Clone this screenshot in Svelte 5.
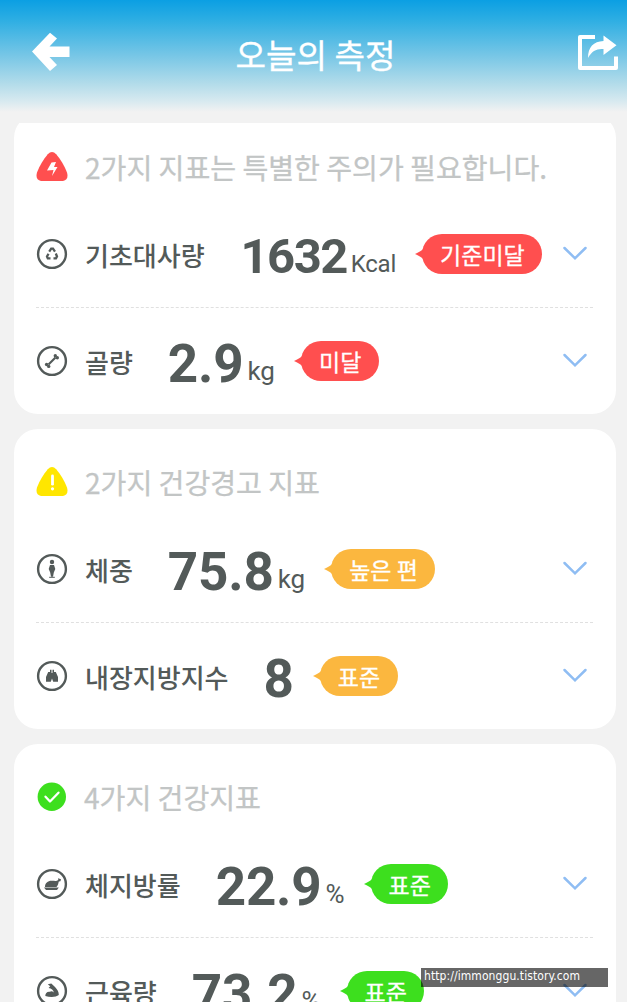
<script lang="ts">
  type Row = {
    icon: string;
    label: string;
    value: string;
    unit: string;
    status: string;
    gap: number;
    compact?: boolean;
  };

  const groups: { tone: string; title: string; rows: Row[] }[] = [
    {
      tone: 'danger',
      title: '2가지 지표는 특별한 주의가 필요합니다.',
      rows: [
        { icon: 'recycle', label: '기초대사량', value: '1632', unit: 'Kcal', status: '기준미달', gap: 36, compact: true },
        { icon: 'bone', label: '골량', value: '2.9', unit: 'kg', status: '미달', gap: 35 },
      ],
    },
    {
      tone: 'warning',
      title: '2가지 건강경고 지표',
      rows: [
        { icon: 'body', label: '체중', value: '75.8', unit: 'kg', status: '높은 편', gap: 35 },
        { icon: 'organ', label: '내장지방지수', value: '8', unit: '', status: '표준', gap: 35 },
      ],
    },
    {
      tone: 'good',
      title: '4가지 건강지표',
      rows: [
        { icon: 'roast', label: '체지방률', value: '22.9', unit: '%', status: '표준', gap: 35 },
        { icon: 'muscle', label: '근육량', value: '73.2', unit: '%', status: '표준', gap: 35 },
      ],
    },
  ];
</script>

<div class="screen">
  <header class="topbar">
    <button class="icon-btn" aria-label="뒤로">
      <svg width="40" height="40" viewBox="0 0 40 40">
        <path d="M1 19.5 L19 .8 L26 6.5 L18.5 14.5 H38.5 V25 H18.5 L26 33 L19 39 Z" fill="#fff" />
      </svg>
    </button>
    <h1>오늘의 측정</h1>
    <button class="icon-btn" aria-label="공유">
      <svg width="42" height="42" viewBox="0 0 42 42">
        <path d="M18 5 H3 V36 H39 V24.5" fill="none" stroke="#fff" stroke-width="4" stroke-linejoin="round" />
        <path d="M11 26 C11 15 16.5 9.5 26.5 9 V3.5 L39.5 13.2 L26.5 23 V17 C19.5 16.5 15 19 11 26 Z" fill="#fff" />
      </svg>
    </button>
  </header>

  <main class="list">
    {#each groups as group}
      <section class="card {group.tone}">
        <div class="card-head">
          <svg class="tone-icon" width="32" height="32" viewBox="0 0 32 32">
            {#if group.tone === 'good'}
              <circle cx="15.8" cy="15.7" r="14.2" fill="#3ddf1e" />
              <path d="M9.5 15.7 L14 20.5 L22.5 11.7" fill="none" stroke="#fff" stroke-width="2.3" stroke-linecap="round" stroke-linejoin="round" />
            {:else}
              <path
                d="M11.8 3.2 Q16 -1 20.2 3.2 C24.5 8.5 28.5 14.5 31 21.5 Q33 29 27 30 H5 Q-1 29 1 21.5 C3.5 14.5 7.5 8.5 11.8 3.2 Z"
                fill={group.tone === 'danger' ? '#ff4f4f' : '#ffe600'}
              />
              {#if group.tone === 'danger'}
                <path d="M15.5 11.5 L20 11 L18 16 L21.5 16 L16 25 L17.5 19 L11 19.5 Z" fill="#fff" />
              {:else}
                <path d="M16.5 10 V18.2" stroke="#fff" stroke-width="2.8" stroke-linecap="round" />
                <circle cx="16.5" cy="22.8" r="1.6" fill="#fff" />
              {/if}
            {/if}
          </svg>
          <h2>{group.title}</h2>
        </div>

        {#each group.rows as row}
          <div class="row">
            <svg class="row-icon" width="32" height="32" viewBox="0 0 32 32">
              <circle cx="16" cy="16" r="13.9" fill="none" stroke="#535a59" stroke-width="2.4" />
              {#if row.icon === 'recycle'}
                <g fill="none" stroke="#535a59" stroke-width="2.3">
                  <path d="M13.2 13.6 L15.2 10.6 H17 L19 13.6" />
                  <path d="M19.8 15.5 L21 18.5 L20 20.4 H17.5" />
                  <path d="M14.5 20.4 H11.8 L11 18.5 L12.5 15.8" />
                </g>
              {:else if row.icon === 'bone'}
                <path d="M12.5 19.5 L19.5 12.5" stroke="#535a59" stroke-width="2.2" />
                <g fill="#535a59">
                  <circle cx="10.6" cy="19.5" r="1.7" />
                  <circle cx="12.7" cy="21.4" r="1.7" />
                  <circle cx="19.3" cy="10.7" r="1.7" />
                  <circle cx="21.3" cy="12.7" r="1.7" />
                </g>
              {:else if row.icon === 'body'}
                <circle cx="16" cy="9" r="2.2" fill="#535a59" />
                <path d="M14 11.9 H18 L19.3 16 L17.8 19.6 L17 23.8 H15 L14.2 19.6 L12.7 16 Z" fill="#535a59" />
                <path d="M13.2 24.3 H18.8" stroke="#535a59" stroke-width="1" />
              {:else if row.icon === 'organ'}
                <path d="M14 9.8 H15.5 V13 H16.5 V9.8 H18 V12 H19.8 L22 17 V21.8 H17.2 L16 18.5 L14.8 21.8 H10 V17 L12.2 12 H14 Z" fill="#535a59" />
              {:else if row.icon === 'roast'}
                <path d="M9 19 C9 15 12 12.6 16 12.8 C19 12.8 20 13.8 22.3 11.7 L22 10.3 L23.5 10.8 L25 11.2 L24.4 13.2 L22.8 13.4 C22.3 15 22.3 17 20.5 19 Z" fill="#535a59" />
                <path d="M8 19.6 H22.8 L21 22 H10 Z" fill="#535a59" />
              {:else}
                <path d="M11.8 9.3 L15.3 8.6 L19 12 C21.5 14.5 22.8 17 22.8 20 C20 22.3 14 22.3 9.3 21 C9.3 18.3 11 16.4 13.8 16.8 C15.3 15.8 16.5 16.3 17.8 17.5 C17.4 15 15.5 13.5 12.6 13 L14.2 11.3 Z" fill="#535a59" />
              {/if}
            </svg>
            <span class="label">{row.label}</span>
            <span class="value" class:compact={row.compact} style="margin-left: {row.gap}px">{row.value}</span>
            {#if row.unit}
              <span class="unit" class:small={row.compact}>{row.unit}</span>
            {/if}
            <span class="badge">
              <svg class="tail" width="12" height="22" viewBox="0 0 12 22">
                <path d="M12 1 C9 6 6 8.5 0 11 C6 13.5 9 16 12 21 Z" fill="currentColor" />
              </svg>
              <span class="badge-text">{row.status}</span>
            </span>
            <svg class="chevron" width="26" height="16" viewBox="0 0 26 16">
              <path d="M2.5 2 L13 12.3 L23.5 2" fill="none" stroke="#8fbdf3" stroke-width="2.5" stroke-linecap="round" />
            </svg>
          </div>
        {/each}
      </section>
    {/each}
  </main>

  <div class="watermark">http://immonggu.tistory.com</div>
</div>

<style>
  :global(body) {
    margin: 0;
    background: #f2f2f2;
  }

  .screen {
    position: relative;
    display: flex;
    flex-direction: column;
    width: 627px;
    height: 1002px;
    overflow: hidden;
    background: #f2f2f2;
    font-family: Roboto, 'Noto Sans CJK KR', sans-serif;
    color: #535a59;
  }

  .topbar {
    display: flex;
    flex: none;
    align-items: flex-start;
    box-sizing: border-box;
    height: 123px;
    padding: 32px 8px 0 31px;
    background: linear-gradient(#0b9fe3 0, #2daee3 20px, #76c6e6 55px, #b3dcea 84px, #d9eaf0 102px, #f2f2f2 112px);
  }

  .icon-btn {
    padding: 0;
    border: 0;
    background: none;
    line-height: 0;
  }

  h1 {
    flex: 1;
    margin: 0 17px 0 0;
    font: 400 33.2px/43px 'Noto Sans CJK KR', sans-serif;
    text-align: center;
    color: #fff;
    -webkit-text-stroke: 0.3px #fff;
  }

  .list {
    flex: 1;
    min-height: 0;
    padding: 0 11px 0 14px;
    overflow: hidden;
  }

  .card {
    margin-bottom: 15px;
    border-radius: 24px;
    background: #fff;
  }

  /* the list is scrolled slightly under the top bar */
  .card:first-child {
    margin-top: -9px;
  }

  .card-head {
    display: flex;
    align-items: center;
    box-sizing: border-box;
    height: 86px;
    padding: 20px 22px 0;
  }

  h2 {
    margin: 0 0 0 17px;
    font: 400 28.1px/30px 'Noto Sans CJK KR', sans-serif;
    color: #c2c5c5;
    white-space: nowrap;
    -webkit-text-stroke: 0.3px #c2c5c5;
  }

  .good h2 {
    margin-left: 16px;
  }

  .row {
    display: flex;
    align-items: center;
    box-sizing: border-box;
    height: 107px;
    margin: 0 23px 0 22px;
    white-space: nowrap;
  }

  .row + .row {
    border-top: 1px dashed #e0e0e0;
  }

  .row-icon {
    flex: none;
  }

  .label {
    margin: 2px 0 0 17px;
    font: 500 26px/30px 'Noto Sans CJK KR', sans-serif;
  }

  .value {
    margin-top: 6px;
    font-weight: 700;
    font-size: 53px;
    line-height: 60px;
    letter-spacing: -0.2px;
  }

  .value.compact {
    font-size: 49px;
    letter-spacing: -1.6px;
  }

  .unit {
    margin: 20px 0 0 4px;
    font-size: 26px;
    line-height: 30px;
  }

  .unit.small {
    font-size: 24px;
    letter-spacing: -0.2px;
  }

  .badge {
    display: flex;
    align-items: center;
    margin-left: 19px;
  }

  .tail {
    margin-right: -5px;
  }

  .badge-text {
    padding: 0 17.5px 0 18px;
    border-radius: 20px;
    font: 400 23px/40px 'Noto Sans CJK KR', sans-serif;
    color: #fff;
    -webkit-text-stroke: 0.3px #fff;
  }

  .danger .tail {
    color: #ff4f4f;
  }

  .warning .tail {
    color: #fbb73f;
  }

  .good .tail {
    color: #3ddf1e;
  }

  .danger .badge-text {
    background: #ff4f4f;
  }

  .warning .badge-text {
    background: #fbb73f;
  }

  .good .badge-text {
    background: #3ddf1e;
  }

  .chevron {
    flex: none;
    margin-left: auto;
    margin-right: 5px;
  }

  .watermark {
    position: absolute;
    left: 421px;
    top: 968px;
    box-sizing: border-box;
    width: 187px;
    height: 19px;
    padding-left: 3px;
    font: 12px/16px 'DejaVu Sans Condensed', 'DejaVu Sans', sans-serif;
    letter-spacing: 0.08px;
    color: #fff;
    background: rgba(0, 0, 0, 0.6);
    white-space: nowrap;
  }
</style>
